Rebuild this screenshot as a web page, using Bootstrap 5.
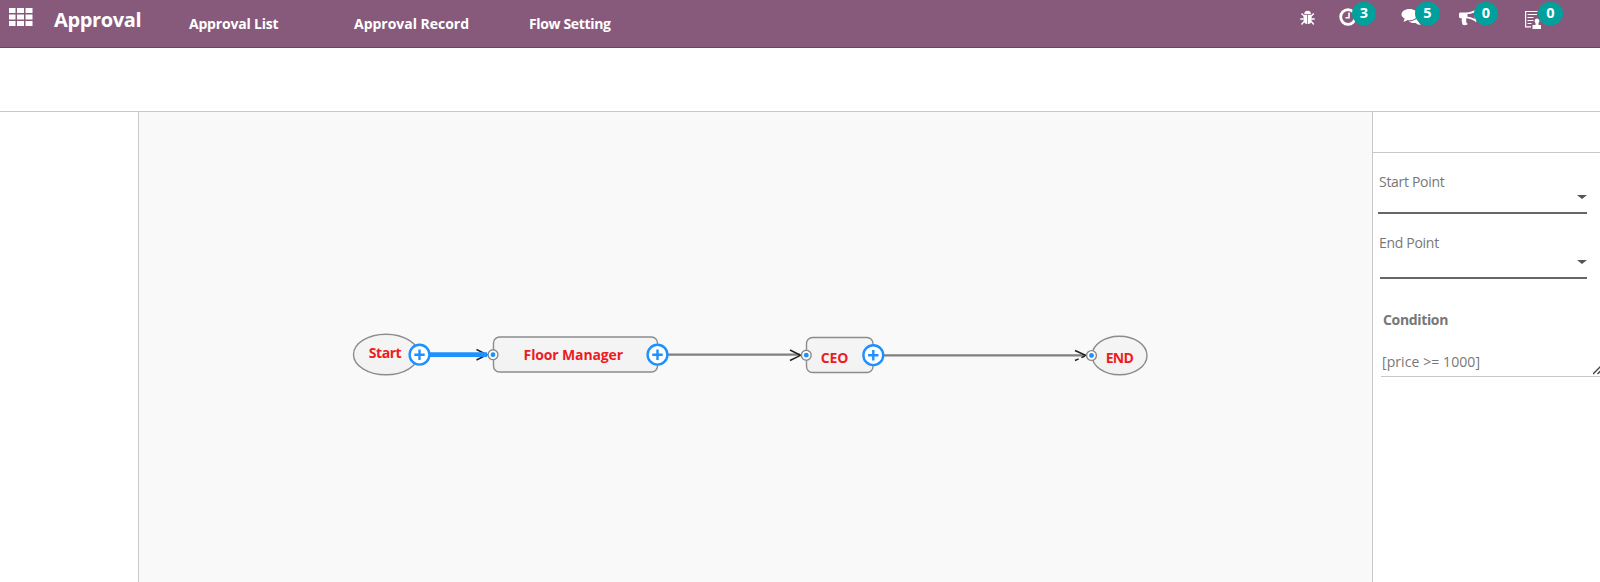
<!DOCTYPE html>
<html lang="en">
<head>
<meta charset="utf-8">
<title>Approval</title>
<link href="https://cdn.jsdelivr.net/npm/bootstrap@5.3.0/dist/css/bootstrap.min.css" rel="stylesheet">
<style>
body{font-family:"Open Sans","Noto Sans",sans-serif;font-size:14px;line-height:20px;color:#777;background:#fff}
.topbar{height:48px;background:#875a7b;border-bottom:1px solid #68465f;color:#fff}
.apps{margin-left:9px;margin-top:8px}
.title{font-size:20px;font-weight:700;line-height:28px;margin-top:6px;margin-left:21px;width:135px;letter-spacing:-.35px}
.menu a{color:#fff;text-decoration:none;font-weight:700;margin-top:14px;line-height:20px;white-space:nowrap;letter-spacing:-.2px}
.menu .m2{letter-spacing:-.02px}
.menu .m3{letter-spacing:-.35px}
.m1{width:165px}.m2{width:175px}
.tray svg{display:block}
.tray .cell{height:47px}
.count{left:13px;top:2px;width:24px;height:23px;border-radius:12px;background:#00a09d;font-weight:700;line-height:22px;font-size:14.5px}
.toolbar{height:64px;border-bottom:1px solid #c8c8c8}
.workspace{height:470px}
.palette{width:139px;border-right:1px solid #c8c8c8}
.flowchart{width:1233px;background:#f9f9f9}
.flowchart svg{display:block}
.props{width:228px;border-left:1px solid #c8c8c8}
.props-head{height:41px;border-bottom:1px solid #c8c8c8}
.field{border-bottom:2px solid #666;width:209px;margin-left:5px;letter-spacing:-.3px}
.caret{width:0;height:0;border:5px solid transparent;border-top:4.5px solid #555;border-bottom:0}
.cond-label{letter-spacing:-.35px}
.cond{margin-left:8px;border-bottom:1px solid #c8c8c8;height:26px;padding-left:1px;letter-spacing:.08px}
.node-text{font-weight:700;font-size:14px;fill:#ed1c24}
</style>
</head>
<body class="overflow-hidden">
<header class="topbar d-flex">
  <svg class="apps flex-shrink-0" width="24" height="18" fill="#fff"><path d="M0 0h6.500v5H0zM8 0h7v5h-7zM16.500 0h7v5h-7zM0 6.500h6.500v5H0zM8 6.500h7v5h-7zM16.500 6.500h7v5h-7zM0 13h6.500v5H0zM8 13h7v5h-7zM16.500 13h7v5h-7z"/></svg>
  <div class="title">Approval</div>
  <nav class="menu d-flex"><a class="m1" href="#">Approval List</a><a class="m2" href="#">Approval Record</a><a class="m3" href="#">Flow Setting</a></nav>
  <div class="tray d-flex ms-auto">
    <div class="cell" style="width:40px"><svg width="18" height="30" viewBox="1299 0 18 30" fill="#fff"><path d="M1304.300 14a3.300 3.300 0 0 1 6.600 0zM1303.500 14.700h3.800v9.300c-2.500 0-3.800-1.700-3.800-4zM1308 14.700h3.700v5.300c0 2.300-1.200 4-3.700 4z"/><path d="M1304 16l-2.500-2.500M1303.500 19h-3.200M1304 21.500l-2.500 3M1311.300 16l2.500-2.500M1311.500 19h3.200M1311.300 21.500l2.500 3" stroke="#fff" stroke-width="1.400"/></svg></div>
    <div class="cell position-relative" style="width:62px"><svg width="20" height="30" fill="none" stroke="#fff"><circle cx="9" cy="17" r="7.300" stroke-width="2.800"/><path d="M10 12.500v5.300H6.500" stroke-width="1.600"/></svg><span class="count position-absolute text-center" style="left:13px">3</span></div>
    <div class="cell position-relative" style="width:57px"><svg width="22" height="30" fill="#fff"><path d="M8.500 9c4.500 0 8 2.400 8 5.600s-3.500 5.600-8 5.600c-.7 0-1.300 0-2-.2-1.500 1.200-3 1.600-4.200 1.600l1.500-2.800C1.700 17.800.5 16.300.5 14.600.5 11.400 4 9 8.500 9z"/><path d="M18 13.500c1.300 1 2 2.200 2 3.500 0 1.500-.8 2.800-2.200 3.800.3 2.200 1.200 3.500 2 4.200-2 0-4-.8-5-2-3 .4-5.500-.2-7-1.700 5 0 9.700-2.300 10.200-7.800z"/></svg><span class="count position-absolute text-center" style="left:14px;width:25px">5</span></div>
    <div class="cell position-relative" style="width:67px"><svg width="22" height="30" fill="#fff"><path fill-rule="evenodd" d="M2.500 12.500H8c4 0 7.500-1.200 10.300-3.200v13C15.500 19.700 12 18.500 8.500 18.200c-.8 1 .1 2.200-.3 3.300 0 1.200.8 1.700 1.600 2.500-1.500 1.500-4.200 1.500-5.300.5-.5-2-1.200-4-.6-6.300H2.500c-.8 0-1.500-.6-1.500-1.400v-2.700c0-.9.700-1.600 1.500-1.600zM9.500 14v2.700c2.800.2 5 1 7.200 2.300v-6.800c-2.200 1.100-4.400 1.700-7.200 1.800z"/></svg><span class="count position-absolute text-center" style="left:16px">0</span></div>
    <div class="cell position-relative" style="width:75px"><svg width="20" height="32"><path d="M12.500 11.500H.6v15.400H6" fill="none" stroke="#fff" stroke-width="1.200"/><path d="M2.500 14.500h9.500M2.500 17.500h6M2.500 20.500h6M2.500 23.500h4" stroke="#fff" stroke-width="1.100"/><path d="M12 18.500a2.500 2.500 0 0 1 1.500 4.400V25H16v4H7.500v-4h3v-2.100a2.500 2.500 0 0 1 1.500-4.400z" fill="#fff"/></svg><span class="count position-absolute text-center" style="left:13px;width:25px">0</span></div>
  </div>
</header>
<div class="toolbar"></div>
<main class="workspace d-flex">
  <aside class="palette flex-shrink-0"></aside>
  <section class="flowchart flex-shrink-0">
    <svg width="1233" height="470" viewBox="139 112 1233 470">
      <defs>
        <linearGradient id="face" x1="0" y1="0" x2="0" y2="1"><stop offset="0" stop-color="#f5f5f5"/><stop offset="1" stop-color="#f2f2f2"/></linearGradient>
        <g id="add"><circle r="9.900" fill="#fff" stroke="#1e90ff" stroke-width="2.400"/><path d="M-5.200 0H5.200M0-5.200V5.200" stroke="#1e90ff" stroke-width="2.400"/></g>
        <g id="port"><circle r="4.900" fill="#fff" stroke="#8a8a8a" stroke-width="1.400"/><circle r="2.400" fill="#1e90ff"/></g>
      </defs>
      <g fill="url(#face)" stroke="#8c8c8c" stroke-width="1.400">
        <ellipse cx="386" cy="354.500" rx="32.500" ry="20.300"/>
        <rect x="493.500" y="337" width="164" height="35" rx="6"/>
        <rect x="806.500" y="337.500" width="66.500" height="35" rx="6"/>
        <ellipse cx="1119.500" cy="355.500" rx="27.500" ry="19.300"/>
      </g>
      <path d="M668 354.700H800M884 355.300H1085" stroke="#808080" stroke-width="2.200"/>
      <path d="M476.500 349.500L487 354.700L476.500 360M790 350L800.500 355.300L790 360.500M1075 350.500L1086 355.500" fill="none" stroke="#222" stroke-width="1.500"/>
      <path d="M1075 360.500L1086 355.500" stroke="#222" stroke-width="1.500" stroke-dasharray="4 3"/>
      <path d="M430 354.700H487" stroke="#1e90ff" stroke-width="4.700"/>
      <use href="#port" x="493" y="354.700"/><use href="#port" x="806.300" y="355.200"/><use href="#port" x="1091.500" y="355.500"/>
      <use href="#add" x="419.500" y="354.700"/><use href="#add" x="657.500" y="354.700"/><use href="#add" x="873.300" y="355.200"/>
      <g class="node-text">
        <text x="368.700" y="358" textLength="33">Start</text>
        <text x="523.600" y="360" textLength="99.500">Floor Manager</text>
        <text x="820.800" y="363" textLength="27.500">CEO</text>
        <text x="1105.800" y="363" textLength="28">END</text>
      </g>
    </svg>
  </section>
  <aside class="props flex-shrink-0">
    <div class="props-head"></div>
    <div class="field d-flex justify-content-between" style="height:43px;margin-top:18px"><span style="margin-top:1px;margin-left:1px">Start Point</span><i class="caret" style="margin-top:24px"></i></div>
    <div class="field d-flex justify-content-between" style="height:48px;margin-top:17px;margin-left:7px;width:207px"><span style="margin-top:2px;margin-left:-1px">End Point</span><i class="caret" style="margin-top:29px"></i></div>
    <div class="fw-bold" style="margin-left:10px;margin-top:31px"><span class="cond-label">Condition</span></div>
    <div class="cond d-flex" style="margin-top:21px"><span class="flex-grow-1" style="margin-top:1px">[price &gt;= 1000]</span>
      <svg width="7" height="10" style="margin-top:14px"><path d="M0 9L8 1M4.500 9L8 5.500" stroke="#444" stroke-width="1.500"/></svg></div>
  </aside>
</main>
<script src="https://cdn.jsdelivr.net/npm/bootstrap@5.3.0/dist/js/bootstrap.bundle.min.js"></script>
</body>
</html>
